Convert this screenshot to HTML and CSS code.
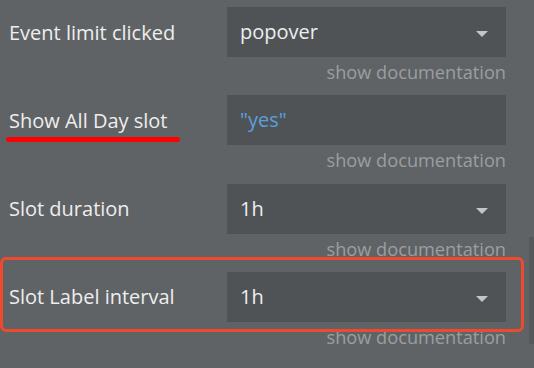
FILE: index.html
```html
<!DOCTYPE html>
<html lang="en">
<head>
  <meta charset="UTF-8" />
  <meta name="viewport" content="width=device-width, initial-scale=1.0" />
  <title>Calendar properties</title>
  <link rel="stylesheet" href="styles.css">
</head>
<body>

  <div class="panel">
    <div class="prop">
      <div class="prop-row">
        <div class="label">Event limit clicked</div>
        <div class="control dropdown">popover</div>
      </div>
      <div class="doc">show documentation</div>
    </div>

    <div class="prop">
      <div class="prop-row">
        <div class="label"><span class="underlined">Show All Day slot</span></div>
        <div class="control"><span class="dynamic">"yes"</span></div>
      </div>
      <div class="doc">show documentation</div>
    </div>

    <div class="prop">
      <div class="prop-row">
        <div class="label">Slot duration</div>
        <div class="control dropdown">1h</div>
      </div>
      <div class="doc">show documentation</div>
    </div>

    <div class="prop">
      <div class="prop-row">
        <div class="label">Slot Label interval</div>
        <div class="control dropdown">1h</div>
      </div>
      <div class="doc">show documentation</div>
    </div>

    <!-- annotation box drawn over the last property -->
    <div class="highlight"></div>
    <div class="scrollbar"></div>
  </div>

</body>
</html>
```

FILE: styles.css
```css
body {
  margin: 0;
  background-color: #5f6366;
  font-family: 'Open Sans', sans-serif;
  color: #eeeeee;
  overflow: hidden;
}

.panel {
  position: relative;
  height: 368px;
  padding: 7px 28px 0 9px;
}

.prop {
  margin-bottom: 11.33px;
}

.prop-row {
  display: grid;
  grid-template-columns: 218px 279px;
  align-items: center;
  height: 50px;
}

.label {
  font-size: 20px;
  line-height: 27px;
  white-space: nowrap;
}

.underlined {
  position: relative;
}

.underlined::after {
  content: "";
  position: absolute;
  left: -3px;
  right: -13px;
  top: 30px;
  height: 5px;
  border-radius: 3px;
  background-color: #ff0000;
}

.control {
  position: relative;
  height: 50px;
  box-sizing: border-box;
  padding: 0 13px;
  background-color: #505356;
  font-size: 20px;
  line-height: 50px;
  color: #eeeeee;
}

.dropdown::after {
  content: "";
  position: absolute;
  right: 18px;
  top: 24px;
  border-left: 6.5px solid transparent;
  border-right: 6.5px solid transparent;
  border-top: 6px solid #c3c5c7;
}

.dynamic {
  color: #5aa0dc;
}

.doc {
  margin-top: 3px;
  font-size: 18.2px;
  line-height: 24px;
  text-align: right;
  color: #9b9ea1;
}

.highlight {
  position: absolute;
  left: 0;
  top: 257px;
  width: 524px;
  height: 75px;
  box-sizing: border-box;
  border: 3px solid #ef4a2d;
  border-radius: 6px;
}

.scrollbar {
  position: absolute;
  left: 529px;
  top: 237px;
  width: 5px;
  height: 107px;
  background-color: #56595c;
}
```
